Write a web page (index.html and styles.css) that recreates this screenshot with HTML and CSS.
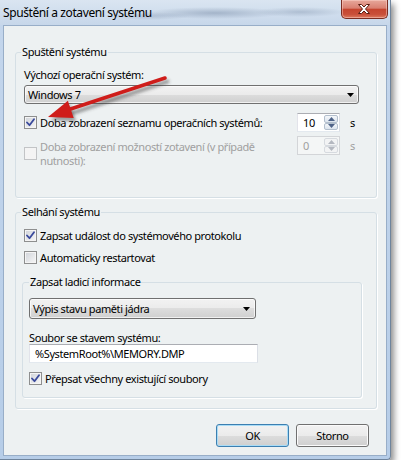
FILE: index.html
```html
<!DOCTYPE html>
<html lang="cs">
<head>
<meta charset="utf-8">
<title>Spuštění a zotavení systému</title>
<link rel="stylesheet" href="styles.css">
</head>
<body>
<div class="window">
  <div class="titlebar">
    <span class="title">Spuštění a zotavení systému</span>
    <div class="close">
      <svg width="45" height="18" viewBox="0 0 45 18">
        <path d="M16.5 4.5 h3 l2.5 2.5 l2.5 -2.5 h3 l-4 4.5 l4 4.5 h-3 l-2.5 -2.5 l-2.5 2.5 h-3 l4 -4.5 z" fill="#ffffff" stroke="#5b1e12" stroke-width="1" stroke-linejoin="round"/>
      </svg>
    </div>
  </div>
  <div class="client">
    <fieldset class="group group-start">
      <legend>Spuštění systému</legend>
      <div class="label">Výchozí operační systém:</div>
      <div class="combo combo-os">
        <span>Windows 7</span>
        <svg class="drop" width="7" height="4" viewBox="0 0 7 4"><path d="M0 0 H7 L3.5 4 Z" fill="#000"/></svg>
      </div>
      <div class="row row-list">
        <span class="cb checked"><svg width="9" height="9" viewBox="0 0 9 9"><path d="M1 4.5 L3.5 7.2 L8 1.2" fill="none" stroke="#3a4a9c" stroke-width="1.8" stroke-linecap="round" stroke-linejoin="round"/></svg></span>
        <span class="row-text">Doba zobrazení seznamu operačních systémů:</span>
        <div class="spin">
          <span class="spin-val">10</span>
          <div class="spin-btns">
            <span class="sb"><svg width="7" height="4" viewBox="0 0 7 4"><path d="M0 4 H7 L3.5 0 Z" fill="#4f6388"/></svg></span>
            <span class="sb"><svg width="7" height="4" viewBox="0 0 7 4"><path d="M0 0 H7 L3.5 4 Z" fill="#4f6388"/></svg></span>
          </div>
        </div>
        <span class="unit">s</span>
      </div>
      <div class="row row-recovery disabled">
        <span class="cb"></span>
        <span class="row-text two-line">Doba zobrazení možností zotavení (v případě<br>nutnosti):</span>
        <div class="spin">
          <span class="spin-val">0</span>
          <div class="spin-btns">
            <span class="sb"><svg width="7" height="4" viewBox="0 0 7 4"><path d="M0 4 H7 L3.5 0 Z" fill="#b4b8c0"/></svg></span>
            <span class="sb"><svg width="7" height="4" viewBox="0 0 7 4"><path d="M0 0 H7 L3.5 4 Z" fill="#b4b8c0"/></svg></span>
          </div>
        </div>
        <span class="unit">s</span>
      </div>
    </fieldset>

    <fieldset class="group group-failure">
      <legend>Selhání systému</legend>
      <div class="row row-check">
        <span class="cb checked"><svg width="9" height="9" viewBox="0 0 9 9"><path d="M1 4.5 L3.5 7.2 L8 1.2" fill="none" stroke="#3a4a9c" stroke-width="1.8" stroke-linecap="round" stroke-linejoin="round"/></svg></span>
        <span>Zapsat událost do systémového protokolu</span>
      </div>
      <div class="row row-check row-gap">
        <span class="cb"></span>
        <span>Automaticky restartovat</span>
      </div>
      <fieldset class="group group-debug">
        <legend>Zapsat ladicí informace</legend>
        <div class="combo combo-dump">
          <span>Výpis stavu paměti jádra</span>
          <svg class="drop" width="7" height="4" viewBox="0 0 7 4"><path d="M0 0 H7 L3.5 4 Z" fill="#000"/></svg>
        </div>
        <div class="label label-file">Soubor se stavem systému:</div>
        <div class="textbox">%SystemRoot%\MEMORY.DMP</div>
        <div class="row row-check row-overwrite">
          <span class="cb checked"><svg width="9" height="9" viewBox="0 0 9 9"><path d="M1 4.5 L3.5 7.2 L8 1.2" fill="none" stroke="#3a4a9c" stroke-width="1.8" stroke-linecap="round" stroke-linejoin="round"/></svg></span>
          <span>Přepsat všechny existující soubory</span>
        </div>
      </fieldset>
    </fieldset>

    <div class="buttons">
      <button class="btn btn-default">OK</button>
      <button class="btn">Storno</button>
    </div>
  </div>
</div>

<svg class="callout" width="200" height="130" viewBox="0 0 200 130">
  <defs>
    <filter id="blur" x="-20%" y="-50%" width="140%" height="200%">
      <feGaussianBlur stdDeviation="1.6"/>
    </filter>
  </defs>
  <g transform="translate(2.5 3.5)" filter="url(#blur)" fill="rgba(60,60,60,0.45)" stroke="rgba(60,60,60,0.45)">
    <line x1="70" y1="109.5" x2="165" y2="78" stroke-width="4" stroke-linecap="round"/>
    <polygon points="48,117 73.7,118.1 67.9,100.7" stroke="none"/>
  </g>
  <line x1="69" y1="109.5" x2="165" y2="78" stroke="#cf1d1a" stroke-width="3.6" stroke-linecap="round"/>
  <polygon points="48,117 73.7,118.1 67.9,100.7" fill="#cf1d1a"/>
</svg>
</body>
</html>
```

FILE: styles.css
```css
* {
  box-sizing: border-box;
}

body {
  margin: 0;
  background: #ffffff;
  font-family: "Noto Sans", "Liberation Sans", sans-serif;
  font-size: 11px;
  letter-spacing: -0.4px;
  color: #000;
  position: relative;
}

.window {
  width: 391px;
  height: 460px;
  display: flex;
  flex-direction: column;
  background: linear-gradient(#c4d6ec, #b6cde8);
  border-right: 1px solid #6f849c;
  border-bottom: 1px solid #6f849c;
  border-radius: 0 0 4px 0;
  box-shadow: 3px 4px 6px rgba(0, 0, 0, 0.45);
}

.titlebar {
  height: 25px;
  flex: none;
  display: flex;
  justify-content: space-between;
  align-items: flex-start;
  background:
    radial-gradient(ellipse 70px 6px at 215px 13px, rgba(110, 130, 158, 0.45), transparent),
    radial-gradient(ellipse 45px 5px at 300px 12px, rgba(110, 130, 158, 0.35), transparent),
    radial-gradient(ellipse 40px 4px at 150px 16px, rgba(110, 130, 158, 0.3), transparent),
    linear-gradient(#dae5f1, #c7d7ea);
}

.title {
  padding-left: 3px;
  line-height: 26px;
  font-size: 12px;
  color: #000;
}

.close {
  width: 47px;
  height: 19px;
  margin-right: 2px;
  border: 1px solid #7a2d22;
  border-top: none;
  border-radius: 0 0 5px 5px;
  background: linear-gradient(#e7a89b 0%, #d98071 45%, #c5452f 52%, #c9503a 80%, #dd7a5f 100%);
  box-shadow: inset 0 0 0 1px rgba(255, 220, 210, 0.45);
  display: flex;
  align-items: center;
  justify-content: center;
}

.client {
  flex: 1;
  margin: 0 3px 3px 3px;
  background: #edf1f2;
  border: 1px solid #98aec8;
  padding: 18px 9px 0 11px;
  display: flex;
  flex-direction: column;
}

.group {
  margin: 0;
  min-width: 0;
  border: 1px solid #d5dfe5;
  border-radius: 3px;
  box-shadow: 1px 1px 0 #ffffff;
}

.group legend {
  line-height: 16px;
  padding: 0 1px;
  margin-left: -3px;
}

.group-start {
  padding: 7px 8px 30px 8px;
}

.group-failure {
  margin-top: 6px;
  padding: 8px 8px 10px 8px;
}

.group-debug {
  margin: 9px 6px 0 -2px;
  padding: 8px 6px 11px 6px;
}

.group-debug legend {
  margin-left: 0;
}

.label {
  line-height: 15px;
}

.combo {
  display: flex;
  align-items: center;
  justify-content: space-between;
  border: 1px solid #707070;
  border-radius: 3px;
  background: linear-gradient(#f2f2f2 0%, #ebebeb 50%, #dddddd 50%, #cfcfcf 100%);
  box-shadow: inset 0 0 0 1px rgba(255, 255, 255, 0.7);
  padding: 0 4px 0 3px;
}

.combo-os {
  margin-top: 3px;
  width: 335px;
  height: 19px;
}

.combo-dump {
  width: 227px;
  height: 21px;
  padding-right: 5px;
}

.row {
  display: flex;
  align-items: center;
}

.cb {
  width: 13px;
  height: 13px;
  flex: none;
  margin-right: 3px;
  border: 1px solid #8e8f8f;
  background: linear-gradient(135deg, #cfd3d9, #f7f7f7);
  box-shadow: inset 0 0 0 1px #f4f4f4;
  display: flex;
  align-items: center;
  justify-content: center;
}

.disabled .cb {
  border-color: #c2c4c6;
  background: #f4f4f4;
  box-shadow: none;
}

.row-text {
  flex: 1;
}

.row-list {
  margin-top: 9px;
  height: 19px;
}

.row-recovery {
  margin-top: 4px;
  align-items: flex-start;
}

.row-recovery .cb {
  margin-top: 11px;
}

.two-line {
  padding-top: 4px;
  line-height: 13.5px;
}

.disabled {
  color: #a0a0a0;
}

.spin {
  width: 43px;
  height: 19px;
  flex: none;
  display: flex;
  background: #ffffff;
  border: 1px solid;
  border-color: #abadb3 #dbdfe6 #e3e9ef #e2e3ea;
}

.disabled .spin {
  border-color: #d3d5d8;
  background: #f4f6f6;
}

.spin-val {
  flex: 1;
  padding-left: 5px;
  line-height: 17px;
}

.spin-btns {
  width: 15px;
  display: flex;
  flex-direction: column;
  padding: 1px 1px 1px 0;
}

.sb {
  flex: 1;
  border: 1px solid #b3bfcd;
  border-radius: 2px;
  background: linear-gradient(#f4f7fa, #dce4ee);
  display: flex;
  align-items: center;
  justify-content: center;
}

.disabled .sb {
  border-color: #d6dadf;
  background: #f2f3f4;
}

.unit {
  width: 18px;
  margin-left: 10px;
  line-height: 19px;
}

.row-check {
  line-height: 15px;
}

.row-gap {
  margin-top: 7px;
}

.label-file {
  margin-top: 12px;
  line-height: 13px;
}

.textbox {
  width: 229px;
  height: 19px;
  background: #ffffff;
  border: 1px solid;
  border-color: #abadb3 #dbdfe6 #e3e9ef #e2e3ea;
  padding-left: 5px;
  line-height: 17px;
}

.row-overwrite {
  margin-top: 8px;
}

.buttons {
  margin-top: 15px;
  display: flex;
  justify-content: flex-end;
  gap: 7px;
  padding-right: 8px;
}

.btn {
  width: 73px;
  height: 23px;
  font: inherit;
  letter-spacing: inherit;
  color: #000;
  border: 1px solid #707070;
  border-radius: 3px;
  background: linear-gradient(#f2f2f2 0%, #ebebeb 50%, #dddddd 50%, #cfcfcf 100%);
  box-shadow: inset 0 0 0 1px #fbfbfb;
  padding: 0;
}

.btn-default {
  border-color: #3c7fb1;
  box-shadow: inset 0 0 0 1px #a9dcf6;
}

.callout {
  position: absolute;
  left: 0;
  top: 0;
  pointer-events: none;
}
```
